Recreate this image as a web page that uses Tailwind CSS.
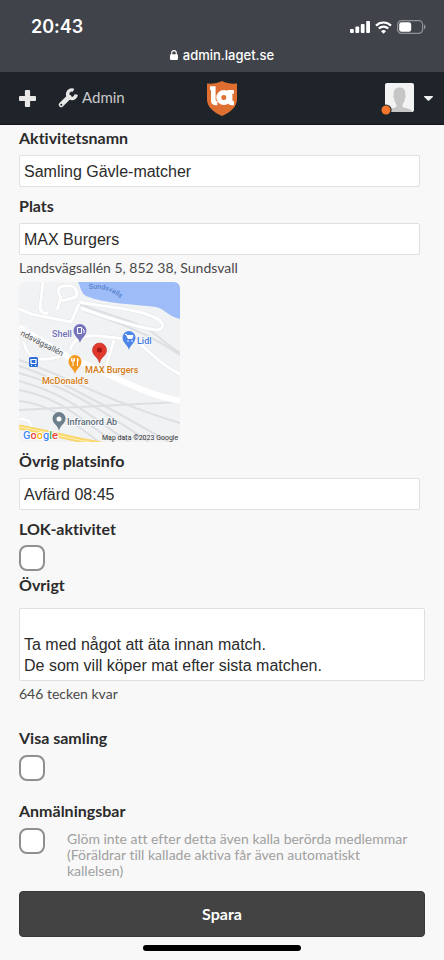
<!DOCTYPE html>
<html lang="sv">
    <head>
        <meta charset="UTF-8" />
        <meta name="viewport" content="width=device-width, initial-scale=1.0" />
        <title>admin.laget.se</title>
        <script src="https://cdn.jsdelivr.net/npm/@tailwindcss/browser@4"></script>
    </head>
    <body class="bg-[#f8f8f8] font-['Lato',sans-serif] text-[#2b2b2b] [font-variant-ligatures:none]">
        <!-- status bar -->
        <div class="h-18 bg-[#40444a] text-white font-['Inter',sans-serif]">
            <div class="flex justify-between items-center pt-[13px] pl-[31px] pr-[18px]">
                <span class="text-lg leading-7 font-semibold">20:43</span>
                <div class="flex items-center gap-[5px]">
                    <svg class="w-5 h-3" viewBox="0 0 20 12" fill="white">
                        <rect x="0" y="8" width="3.8" height="4" rx="1" />
                        <rect x="5.4" y="5.6" width="3.8" height="6.4" rx="1" />
                        <rect x="10.8" y="3" width="3.8" height="9" rx="1" />
                        <rect x="16.2" y="0" width="3.8" height="12" rx="1" />
                    </svg>
                    <svg class="w-[17px] h-[13px]" viewBox="0 0 17 13" fill="none" stroke="white" stroke-width="2.2">
                        <path d="M1 4.6a10.6 10.6 0 0 1 15 0" />
                        <path d="M3.8 7.5a6.7 6.7 0 0 1 9.4 0" />
                        <path d="M8.5 12.8 6 10.2a3.6 3.6 0 0 1 5 0z" fill="white" stroke="none" />
                    </svg>
                    <svg class="w-[29px] h-[14px]" viewBox="0 0 29 14">
                        <rect x=".6" y=".6" width="25" height="12.8" rx="4" fill="none" stroke="#8f9296" stroke-width="1.2" />
                        <rect x="2.2" y="2.2" width="12" height="9.6" rx="2.4" fill="white" />
                        <path d="M27 4.6c2 .8 2 4 0 4.8z" fill="#8f9296" />
                    </svg>
                </div>
            </div>
            <div class="flex justify-center items-center gap-[5px] pt-1">
                <svg class="w-2 h-[10px]" viewBox="0 0 8 10">
                    <rect x="0" y="4.3" width="8" height="5.7" rx="1.2" fill="white" />
                    <path d="M1.7 5V3a2.3 2.4 0 0 1 4.6 0v2" fill="none" stroke="white" stroke-width="1.1" />
                </svg>
                <span class="text-[13px] leading-5 font-medium">admin.laget.se</span>
            </div>
        </div>

        <header class="grid grid-cols-3 items-center h-[53px] px-[11px] bg-[#1e242a] border-b border-[#12161a]">
            <div class="flex items-center pl-2">
                <button type="button" aria-label="Skapa">
                    <svg class="w-[17px] h-[17px]" viewBox="0 0 17 17" fill="#e8e8e8">
                        <path d="M6.9 0h3.2q1 0 1 1v4.9H16q1 0 1 1v3.2q0 1-1 1h-4.9V16q0 1-1 1H6.9q-1 0-1-1v-4.9H1q-1 0-1-1V6.9q0-1 1-1h4.9V1q0-1 1-1z" />
                    </svg>
                </button>
                <a href="#" class="flex items-center gap-1 ml-[22px] text-[15px] leading-5 text-[#c9cacb]">
                    <svg class="w-5 h-5" viewBox="0 0 20 20" fill="none" stroke="#e8e8e8">
                        <path d="M3.2 16.800 11 9" stroke-width="4.800" stroke-linecap="round" />
                        <path d="M15.600 2.200a4.300 4.300 0 1 0 2.600 4.300" stroke-width="3.400" />
                        <circle cx="3.300" cy="16.700" r="1" fill="#1e242a" stroke="none" />
                    </svg>
                    <span class="pb-0.5">Admin</span>
                </a>
            </div>
            <a href="#" class="justify-self-center" aria-label="laget.se">
                <svg class="w-[30px] h-[35px]" viewBox="0 0 30 35">
                    <path fill="#df6e31" d="M0 2.600c5.500.5 10.500-.3 15-2.600 4.500 2.300 9.500 3.100 15 2.600v15.400c0 8-6.500 13.300-15 17-8.500-3.700-15-9-15-17z" />
                    <path fill="white" d="M3 5.200h5.600v13.600q0 1.500 1.800 1.500v3.900q-6.400.6-6.400-4.400V9H3z" />
                    <circle cx="16.800" cy="16.500" r="5" fill="none" stroke="white" stroke-width="5" />
                    <path fill="white" d="M20.400 9h6.400v3.800h-1.400v6q0 1.500 1.600 1.500v3.900q-6.600.6-6.600-4z" />
                </svg>
            </a>
            <button type="button" class="justify-self-end flex items-center gap-[10px]" aria-label="Konto">
                <svg class="w-[33px] h-[33px]" viewBox="0 0 33 33">
                    <rect x="4" y="1" width="29" height="29" rx="2" fill="#f3f3f3" />
                    <path fill="#c6c6c6" d="M6 30c.5-2.500 3-3.200 6.500-4 2.800-.7 3.400-1.600 3-3.600-1.500-1.800-2.300-4-2.500-6.400-.8-.8-1-2.600-.2-3.400-.4-4.500 1.700-7 5.700-7s6.100 2.500 5.700 7c.8.8.6 2.600-.2 3.400-.2 2.400-1 4.600-2.500 6.400-.4 2 .2 2.900 3 3.600 3.500.8 6 1.500 6.500 4z" />
                    <circle cx="5" cy="28" r="5.600" fill="#1e242a" />
                    <circle cx="5" cy="28" r="4.500" fill="#f4762e" />
                </svg>
                <svg class="w-[9px] h-[5px]" viewBox="0 0 9 5" fill="#f0f0f0"><path d="M.4 0h8.200q.6.400.2.900L5.200 4.600q-.7.600-1.400 0L.2.900Q-.2.400.4 0z" /></svg>
            </button>
        </header>

        <main class="px-[19px] pt-px pb-2">
            <form class="flex flex-col">
                <div class="pr-[5px] mb-[7px]">
                    <label for="name" class="block mb-[5px] text-base leading-6 font-bold">Aktivitetsnamn</label>
                    <input id="name" type="text" value="Samling Gävle-matcher" class="block w-full h-8 px-1 pt-0.5 bg-white border border-[#e0e0e0] rounded-xs text-base font-['Liberation_Sans',sans-serif]" />
                </div>

                <div class="pr-[5px] mb-[7px]">
                    <label for="place" class="block mb-[5px] text-base leading-6 font-bold">Plats</label>
                    <input id="place" type="text" value="MAX Burgers" class="block w-full h-8 px-1 pt-0.5 bg-white border border-[#e0e0e0] rounded-xs text-base font-['Liberation_Sans',sans-serif]" />
                    <p class="mt-[3px] text-sm leading-5 text-[#4a4a4a]">Landsvägsallén 5, 852 38, Sundsvall</p>
                    <!-- map -->
                    <svg class="block w-[161px] h-40 mt-1 rounded-md font-['Roboto',sans-serif]" viewBox="0 0 161 160" role="img" aria-label="Karta">
                        <rect width="161" height="160" fill="#f0f2f4" />
                        <path d="M59 0h102v37c-12-3-15-10-24-12-22-3-50-3-70-11-5-3-5-8-8-14z" fill="#9dbcf8" />
                        <g fill="none" stroke="#dddfe2" stroke-width="2">
                            <path d="M0 78c40 13 90 42 161 63M0 84c40 13 90 42 150 76M0 91c50 14 80 36 130 69M0 99c50 14 65 31 110 61M0 108c40 7 60 28 95 52M0 119c30 3 50 18 80 41M0 128l160-8M60 22c30 12 50 14 70 26 12 8 20 17 31 23M66 29c30 11 60 20 95 44" />
                        </g>
                        <g fill="none" stroke="#e2e4e7" stroke-width="4">
                            <path d="M0 27l12 5 40 8 8-18M24 0l-3 26q1 6 8 5M38 28l4-12q-6-10 2-12h9q7 4 4 11l-14 4M60 20c25 5 55 6 75 15 12 5 10 14 2 13-25-4-60-16-75-22M51 68c4-12 12-15 30-14l34 4c15 9 25 25 46 34M95 58l-9 30M5 60c3 18 15 20 34 15l10-4" />
                        </g>
                        <g fill="none" stroke="white" stroke-width="3">
                            <path d="M0 27l12 5 40 8 8-18M24 0l-3 26q1 6 8 5M38 28l4-12q-6-10 2-12h9q7 4 4 11l-14 4M60 20c25 5 55 6 75 15 12 5 10 14 2 13-25-4-60-16-75-22M51 68c4-12 12-15 30-14l34 4c15 9 25 25 46 34M95 58l-9 30M5 60c3 18 15 20 34 15l10-4" />
                            <path d="M0 45l49 30c35 12 67 35 112 44" stroke-width="6" />
                            <path d="M0 137c12 0 12 5 13 11" stroke-width="2" />
                        </g>
                        <path d="M0 145c30 5 50 12 82 17" fill="none" stroke="#f9d66e" stroke-width="5" />
                        <path d="M0 145c30 5 50 12 82 17" fill="none" stroke="#fff2b8" stroke-width="1" />

                        <!-- pins -->
                        <path d="M61 61c-1-5-6.500-7-6.500-12.500a6.500 6.500 0 0 1 13 0C67.500 54 62 56 61 61z" fill="#7674bd" />
                        <path d="M58.500 45.500h4v6h-4zM63.500 46.500l1.500 1.500v3" fill="none" stroke="white" />
                        <path d="M110 68c-1-5-6.500-7-6.500-12.500a6.500 6.500 0 0 1 13 0C116.500 61 111 63 110 68z" fill="#4d86e8" />
                        <path d="M106 52.500h1.500l1.500 4h4l1-3h-6" fill="white" stroke="white" />
                        <circle cx="109" cy="59" r=".8" fill="white" /><circle cx="113" cy="59" r=".8" fill="white" />
                        <path d="M56 92c-1-5-6.500-7-6.500-12.500a6.500 6.500 0 0 1 13 0C62.500 85 57 87 56 92z" fill="#f29a24" />
                        <path d="M54 76v8M52.500 76v3h3v-3M58.500 84v-8q1.500 2 0 4" fill="none" stroke="white" />
                        <path d="M80.500 81c-1-6-7-7-7-13a7 7 0 0 1 14 0c0 6-6 7-7 13z" fill="#e1392d" stroke="#b92b22" stroke-width=".6" />
                        <circle cx="80.500" cy="68" r="2.600" fill="#a11a14" />
                        <path d="M40 149c-1-6-6.500-7-6.500-12.500a6.500 6.500 0 0 1 13 0C46.500 142 41 143 40 149z" fill="#6b7f8c" />
                        <circle cx="40" cy="137" r="2.500" fill="white" />
                        <rect x="10" y="75" width="9" height="10" rx="1.500" fill="#2f6fdb" />
                        <path d="M12 77.500h5v4h-5zM12 83.500h1M16 83.500h1" fill="none" stroke="white" stroke-width="1.200" />

                        <g stroke="#f7f8f9" stroke-width="2" paint-order="stroke" font-size="9" font-weight="500">
                            <text x="33" y="55" fill="#7573b5">Shell</text>
                            <text x="118" y="62" fill="#3f7ae0">Lidl</text>
                            <text x="66" y="91" fill="#d67a12">MAX Burgers</text>
                            <text x="23" y="102" fill="#d67a12">McDonald's</text>
                            <text x="48" y="143" fill="#5b6d79">Infranord Ab</text>
                            <text x="1" y="53" fill="#4a4d52" font-size="8" font-weight="400" transform="rotate(27 1 53)">ndsvägsallén</text>
                        </g>
                        <path id="shore" d="M70 7c12-1 22 1 31 9" fill="none" />
                        <text fill="#4a74c2" font-size="7"><textPath href="#shore">Sundsvalls</textPath></text>
                        <text x="83" y="158" fill="#333" font-size="7">Map data ©2023 Google</text>
                        <text x="4" y="157" font-size="11" font-weight="500" stroke="white" stroke-width="2" paint-order="stroke"><tspan fill="#4285f4">G</tspan><tspan fill="#ea4335">o</tspan><tspan fill="#f4b400">o</tspan><tspan fill="#4285f4">g</tspan><tspan fill="#34a853">l</tspan><tspan fill="#ea4335">e</tspan></text>
                    </svg>
                </div>

                <div class="pr-[5px] mb-[7px]">
                    <label for="place-info" class="block mb-[5px] text-base leading-6 font-bold">Övrig platsinfo</label>
                    <input id="place-info" type="text" value="Avfärd 08:45" class="block w-full h-8 px-1 pt-0.5 bg-white border border-[#e0e0e0] rounded-xs text-base font-['Liberation_Sans',sans-serif]" />
                </div>

                <div class="mb-0.5">
                    <label for="lok" class="block mb-1 text-base leading-6 font-bold">LOK-aktivitet</label>
                    <input id="lok" type="checkbox" class="block appearance-none size-[26px] bg-white border-2 border-[#8f8f8f] rounded-lg" />
                </div>

                <div class="mb-[22px]">
                    <label for="other" class="block mb-[11px] text-base leading-6 font-bold">Övrigt</label>
                    <textarea id="other" rows="3" class="block w-full p-1 bg-white border border-[#e0e0e0] rounded-xs resize-none overflow-hidden text-base leading-[21px] font-['Liberation_Sans',sans-serif]">

Ta med något att äta innan match.
De som vill köper mat efter sista matchen.</textarea>
                    <p class="mt-[3px] text-sm leading-5 text-[#4a4a4a]">646 tecken kvar</p>
                </div>

                <div class="mb-[18px]">
                    <label for="show" class="block mb-[5px] text-base leading-6 font-bold">Visa samling</label>
                    <input id="show" type="checkbox" class="block appearance-none size-[26px] bg-white border-2 border-[#8f8f8f] rounded-lg" />
                </div>

                <div class="mb-3">
                    <label for="signup" class="block mb-[5px] text-base leading-6 font-bold">Anmälningsbar</label>
                    <div class="flex items-start gap-[22px] pr-4">
                        <input id="signup" type="checkbox" class="shrink-0 appearance-none size-[26px] bg-white border-2 border-[#8f8f8f] rounded-lg" />
                        <p class="pt-[3px] text-sm leading-4 text-[#a0a0a0]">Glöm inte att efter detta även kalla berörda medlemmar (Föräldrar till kallade aktiva får även automatiskt kallelsen)</p>
                    </div>
                </div>

                <button type="submit" class="h-[46px] bg-[#434343] border border-[#383838] rounded-sm text-base font-bold text-white">Spara</button>
            </form>

            <div class="w-[158px] h-[6px] mt-2 mx-auto rounded-full bg-black"></div>
        </main>
    </body>
</html>
